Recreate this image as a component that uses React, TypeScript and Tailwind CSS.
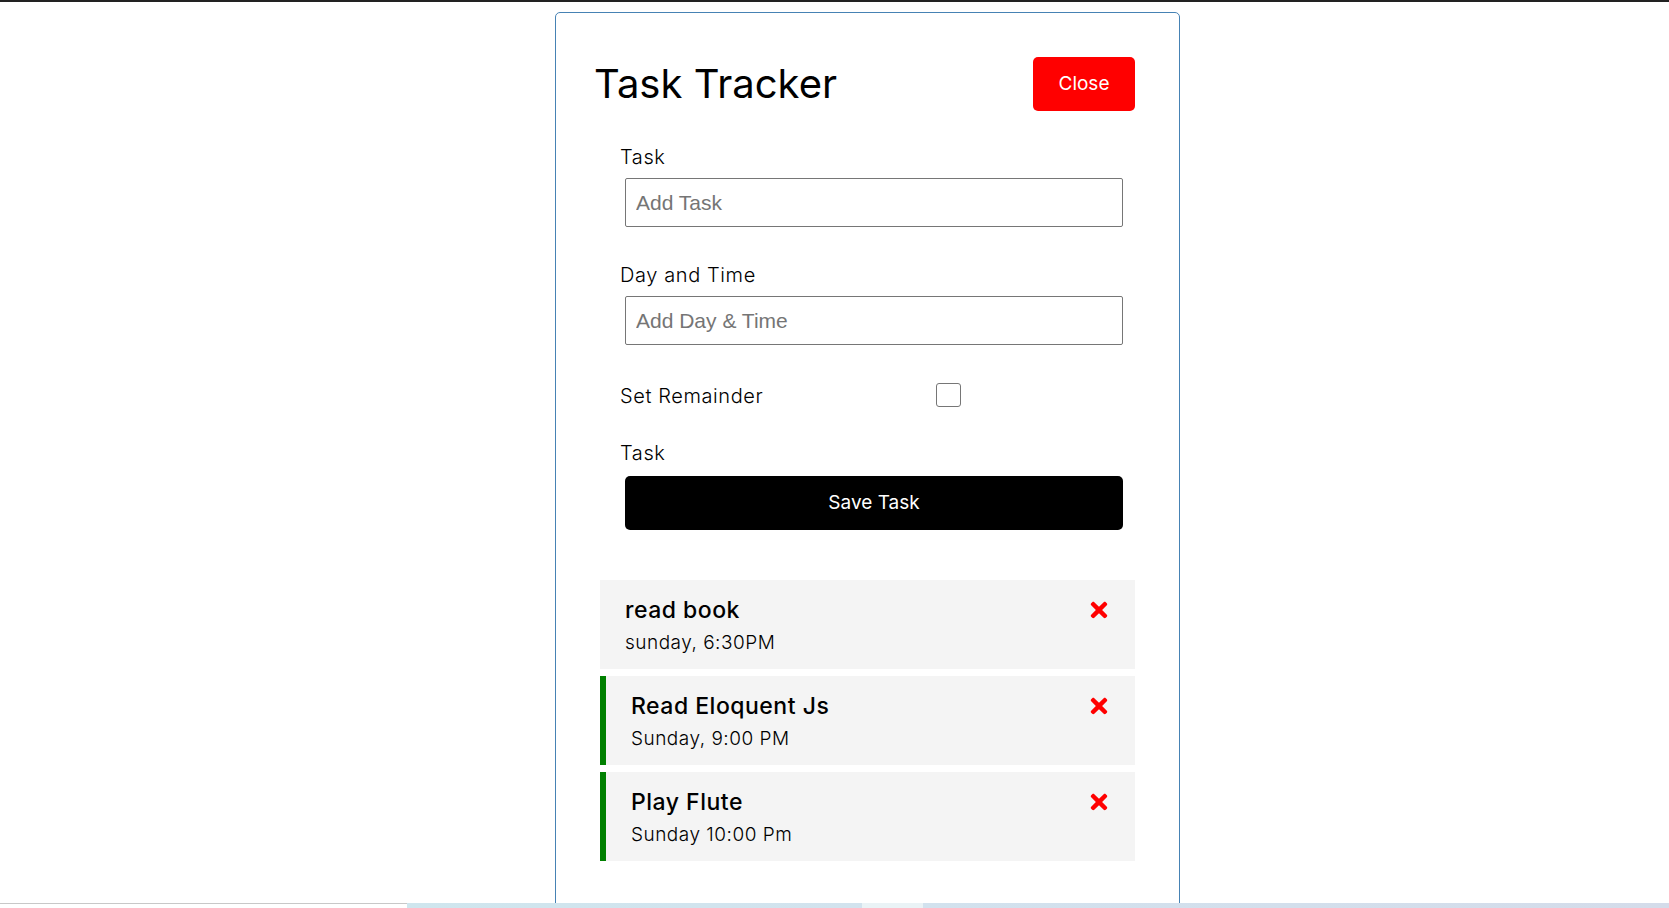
import React, { useState } from "react";
import { FaTimes } from "react-icons/fa";

interface Task {
  id: number;
  text: string;
  day: string;
  reminder: boolean;
}

const initialTasks: Task[] = [
  { id: 1, text: "read book", day: "sunday, 6:30PM", reminder: false },
  { id: 2, text: "Read Eloquent Js", day: "Sunday, 9:00 PM", reminder: true },
  { id: 3, text: "Play Flute", day: "Sunday 10:00 Pm", reminder: true },
];

const TaskItem: React.FC<{ task: Task; onDelete: (id: number) => void }> = ({ task, onDelete }) => {
  return (
    <div
      className={`h-[89px] bg-[#f4f4f4] pt-[15px] pr-[24px] ${
        task.reminder ? "border-l-[6px] border-[#008000] pl-[25px]" : "pl-[25px]"
      }`}
    >
      <div className="flex items-center justify-between h-[30px]">
        <h3 className="text-[23px] leading-[30px] font-medium tracking-[0.5px] text-black">{task.text}</h3>
        <FaTimes size={24} color="#ff0000" className="cursor-pointer" onClick={() => onDelete(task.id)} />
      </div>
      <p className="mt-[5px] text-[19px] leading-[26px] font-light tracking-[0.5px] text-black">{task.day}</p>
    </div>
  );
};

const App: React.FC = () => {
  const [tasks, setTasks] = useState<Task[]>(initialTasks);
  const [text, setText] = useState("");
  const [day, setDay] = useState("");
  const [reminder, setReminder] = useState(false);

  const deleteTask = (id: number) => setTasks(tasks.filter((t) => t.id !== id));

  const onSave = () => {
    if (!text) return;
    setTasks([...tasks, { id: Date.now(), text, day, reminder }]);
    setText("");
    setDay("");
    setReminder(false);
  };

  return (
    <div className="h-[908px] flex flex-col overflow-hidden bg-white font-['Inter',sans-serif] text-black">
      <div className="h-[2px] bg-[#222222]" />
      <div className="flex-1 overflow-hidden">
        <div className="ml-[555px] mt-[10px] w-[625px] min-h-[920px] border border-[#4682b4] rounded-[5px] px-[44px]">
          <header className="mt-[44px] h-[54px] flex items-center justify-between">
            <h1 className="ml-[-6px] text-[40px] leading-none font-normal">Task Tracker</h1>
            <button className="w-[102px] h-[54px] bg-[#ff0000] text-white rounded-[5px] text-[19px]">
              Close
            </button>
          </header>

          <form className="ml-[20px] w-[503px]" onSubmit={(e) => e.preventDefault()}>
            <label className="block mt-[32px] text-[20px] leading-[28px] font-light tracking-[0.6px]">Task</label>
            <input
              type="text"
              placeholder="Add Task"
              value={text}
              onChange={(e) => setText(e.target.value)}
              className="block mt-[7px] ml-[5px] w-[498px] h-[49px] border border-[#767676] rounded-[2px] pl-[10px] text-[21px] font-['Liberation_Sans',Arial,sans-serif] placeholder:text-[#757575] outline-none"
            />

            <label className="block mt-[34px] text-[20px] leading-[28px] font-light tracking-[0.6px]">
              Day and Time
            </label>
            <input
              type="text"
              placeholder="Add Day & Time"
              value={day}
              onChange={(e) => setDay(e.target.value)}
              className="block mt-[7px] ml-[5px] w-[498px] h-[49px] border border-[#767676] rounded-[2px] pl-[10px] text-[21px] font-['Liberation_Sans',Arial,sans-serif] placeholder:text-[#757575] outline-none"
            />

            <div className="mt-[36px] h-[28px] flex items-center">
              <label className="w-[316px] text-[20px] leading-[28px] font-light tracking-[0.6px] translate-y-[1px]">
                Set Remainder
              </label>
              <input
                type="checkbox"
                checked={reminder}
                onChange={(e) => setReminder(e.target.checked)}
                className="appearance-none w-[25px] h-[24px] border border-[#767676] rounded-[3px] bg-white checked:bg-[#0075ff]"
              />
            </div>

            <label className="block mt-[30px] text-[20px] leading-[28px] font-light tracking-[0.6px]">Task</label>
            <button
              type="button"
              onClick={onSave}
              className="block mt-[9px] ml-[5px] w-[498px] h-[54px] bg-black text-white rounded-[5px] text-[19px]"
            >
              Save Task
            </button>
          </form>

          <div className="mt-[50px] flex flex-col gap-[7px]">
            {tasks.map((task) => (
              <TaskItem key={task.id} task={task} onDelete={deleteTask} />
            ))}
          </div>
        </div>
      </div>
      <div className="h-[5px] flex">
        <div className="w-[407px] border-t border-[#c8c8c8] bg-white" />
        <div className="w-[455px] bg-gradient-to-r from-[#cfe6ee] to-[#d2e3ee]" />
        <div className="w-[61px] bg-[#eaf3f6]" />
        <div className="flex-1 bg-gradient-to-r from-[#d2e2ee] to-[#d4dcea]" />
      </div>
    </div>
  );
};

export default App;
